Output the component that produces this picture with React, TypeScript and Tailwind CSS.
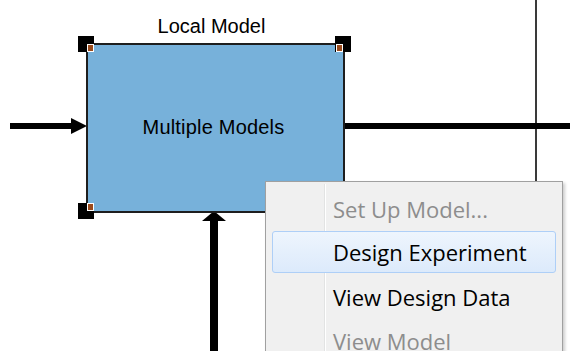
import React from "react";

const diagramFont = { fontFamily: '"Liberation Sans", Arial, sans-serif' };
const menuFont = { fontFamily: '"Open Sans", "Noto Sans", sans-serif' };

function Handle({ x, y, inner }: { x: number; y: number; inner: [number, number, number, number] }) {
  return (
    <g>
      <rect x={x} y={y} width={16} height={16} fill="#000" />
      <rect x={inner[0]} y={inner[1]} width={inner[2]} height={inner[3]} fill="#fff" />
      <rect x={inner[0] + 1} y={inner[1] + 1} width={inner[2] - 2} height={inner[3] - 2} fill="#9a4a1c" />
    </g>
  );
}

export default function App() {
  return (
    <div className="relative w-[570px] h-[351px] overflow-hidden bg-white">
      {/* connectors */}
      <svg className="absolute left-0 top-0" width={570} height={351}>
        <rect x={535} y={0} width={2} height={351} fill="#3a3a3a" />
        <rect x={10} y={123} width={66} height={6} fill="#000" />
        <polygon points="71,118 87,126 71,134" fill="#000" />
        <rect x={343} y={123} width={227} height={6} fill="#000" />
        <rect x={210} y={218} width={8} height={140} fill="#000" />
        <polygon points="202,221 214,211 226,221" fill="#000" />
      </svg>

      {/* block */}
      <div
        className="absolute left-[86px] top-[43px] w-[259px] h-[170px] border-2 border-[#1e1e1e] bg-[#77b1da] flex items-center justify-center text-[20px] text-black"
        style={diagramFont}
      >
        <span className="-translate-x-[2px] -translate-y-[1px] tracking-[0.2px]">Multiple Models</span>
      </div>
      <div
        className="absolute left-[86px] top-[14px] w-[259px] text-center text-[20px] text-black leading-[24px]"
        style={diagramFont}
      >
        <span className="inline-block -translate-x-[4px]">Local Model</span>
      </div>

      <svg className="absolute left-0 top-0" width={570} height={351}>
        <Handle x={78} y={36} inner={[87, 44, 7, 8]} />
        <Handle x={335} y={36} inner={[336, 44, 7, 8]} />
        <Handle x={78} y={203} inner={[87, 203, 7, 8]} />
      </svg>

      {/* context menu */}
      <div
        className="absolute left-[265px] top-[181px] w-[298px] h-[190px] bg-[#f0f0f0] border border-[#a0a0a0] shadow-[2px_2px_3px_rgba(0,0,0,0.2)] pt-[5px] px-[6px] text-[22px] flex flex-col"
        style={menuFont}
      >
        <div className="absolute left-[58px] top-[2px] bottom-0 w-[2px] border-l border-[#e2e3e3] bg-white" />
        <div className="relative h-[44px] flex items-center pl-[61px] text-[#8d8d8d]">Set Up Model...</div>
        <div className="relative h-[42px] mb-[2px] flex items-center pl-[60px] rounded-[3px] border border-[#aecff7] bg-gradient-to-b from-[#eef5fd] to-[#dceafb] text-black">
          Design Experiment
        </div>
        <div className="relative h-[44px] flex items-center pl-[61px] text-black">View Design Data</div>
        <div className="relative h-[44px] flex items-center pl-[61px] text-[#8d8d8d]">View Model</div>
      </div>
    </div>
  );
}
